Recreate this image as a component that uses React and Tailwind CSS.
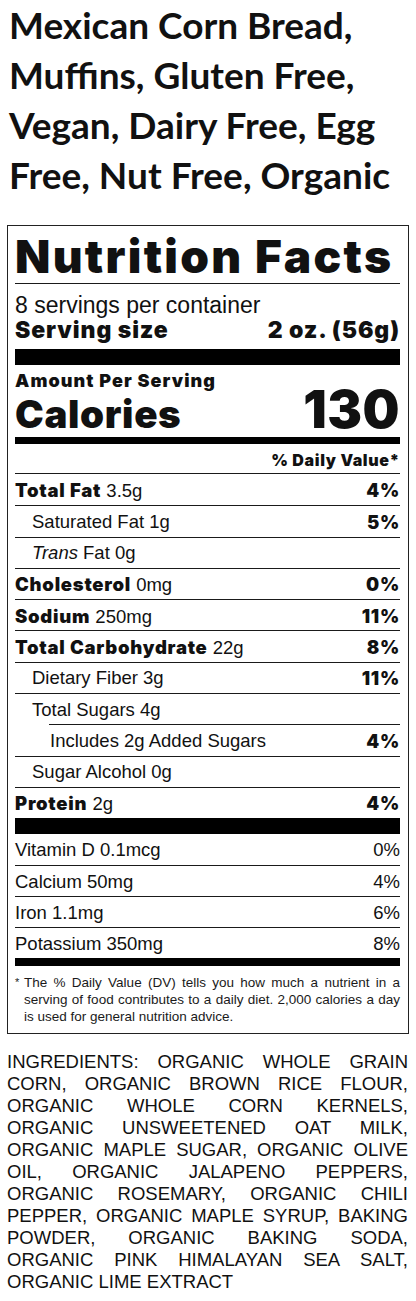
import React from 'react';

const heavy = "font-['Inter',sans-serif] font-black tracking-[0.04em]";
const plain = "font-['Liberation_Sans',Arial,sans-serif]";

const nutrients = [
  { name: 'Total Fat', amount: '3.5g', dv: '4%', bold: true },
  { name: 'Saturated Fat', amount: '1g', dv: '5%', indent: 1 },
  { name: 'Trans', italic: true, amount: 'Fat 0g', indent: 1 },
  { name: 'Cholesterol', amount: '0mg', dv: '0%', bold: true },
  { name: 'Sodium', amount: '250mg', dv: '11%', bold: true },
  { name: 'Total Carbohydrate', amount: '22g', dv: '8%', bold: true },
  { name: 'Dietary Fiber', amount: '3g', dv: '11%', indent: 1 },
  { name: 'Total Sugars', amount: '4g', indent: 1 },
  { name: 'Includes 2g Added Sugars', dv: '4%', indent: 2 },
  { name: 'Sugar Alcohol', amount: '0g', indent: 1 },
  { name: 'Protein', amount: '2g', dv: '4%', bold: true },
];

const vitamins = [
  { name: 'Vitamin D 0.1mcg', dv: '0%' },
  { name: 'Calcium 50mg', dv: '4%' },
  { name: 'Iron 1.1mg', dv: '6%' },
  { name: 'Potassium 350mg', dv: '8%' },
];

const ingredientLines = [
  'INGREDIENTS: ORGANIC WHOLE GRAIN',
  'CORN, ORGANIC BROWN RICE FLOUR,',
  'ORGANIC WHOLE CORN KERNELS,',
  'ORGANIC UNSWEETENED OAT MILK,',
  'ORGANIC MAPLE SUGAR, ORGANIC OLIVE',
  'OIL, ORGANIC JALAPENO PEPPERS,',
  'ORGANIC ROSEMARY, ORGANIC CHILI',
  'PEPPER, ORGANIC MAPLE SYRUP, BAKING',
  'POWDER, ORGANIC BAKING SODA,',
  'ORGANIC PINK HIMALAYAN SEA SALT,',
];

const footnoteLines = [
  'The % Daily Value (DV) tells you how much a nutrient in a',
  'serving of food contributes to a daily diet. 2,000 calories a day',
];

function NutrientRow({ item, first }) {
  const label = item.bold ? (
    <span className={heavy}>{item.name}</span>
  ) : item.italic ? (
    <span className="italic">{item.name}</span>
  ) : (
    <span>{item.name}</span>
  );

  return (
    <div
      className={
        'flex h-[31.3px] justify-between pt-[5.5px] text-[18.5px] leading-[20px] ' +
        (first ? '' : 'border-t border-[#1a1a1a] ') +
        (item.indent === 2 ? 'ml-[34px] pl-[1px]' : item.indent === 1 ? 'pl-[17px]' : '')
      }
    >
      <div>
        {label}
        {item.amount ? ' ' + item.amount : ''}
      </div>
      {item.dv && <div className={heavy}>{item.dv}</div>}
    </div>
  );
}

function NutritionLabel() {
  return (
    <div className={`mx-[7px] mt-[25px] border border-[#222] pl-[7px] pr-[8px] text-[#111] ${plain}`}>
      <div className={`${heavy} border-b border-[#1a1a1a] pt-[7px] pb-[4px] text-[46px] leading-[46px] !tracking-[0.05em]`}>
        Nutrition Facts
      </div>

      <div className="mt-[9px] text-[23px] leading-[25px]">8 servings per container</div>
      <div className={`${heavy} flex justify-between text-[23px] leading-[25px]`}>
        <span>Serving size</span>
        <span>2 oz. (56g)</span>
      </div>

      <div className="mt-[6px] h-[16px] bg-black" />

      <div className={`${heavy} mt-[6px] text-[18px] leading-[20px] !tracking-[0.06em]`}>Amount Per Serving</div>
      <div className={`${heavy} flex items-baseline justify-between`}>
        <span className="text-[38.5px] leading-[37px]">Calories</span>
        <span className="text-[52px] leading-[37px] !tracking-[0.01em]">130</span>
      </div>

      <div className="mt-[4px] h-[7px] bg-black" />

      <div className={`${heavy} border-b border-[#1a1a1a] pt-[6px] pb-[3px] text-right text-[16px] leading-[20px]`}>
        % Daily Value*
      </div>

      {nutrients.map((item, i) => (
        <NutrientRow key={item.name} item={item} first={i === 0} />
      ))}

      <div className="h-[16px] bg-black" />

      {vitamins.map((v, i) => (
        <div
          key={v.name}
          className={
            'flex h-[31px] justify-between pt-[5.5px] text-[18.5px] leading-[20px] ' +
            (i === 0 ? '' : 'border-t border-[#1a1a1a]')
          }
        >
          <span>{v.name}</span>
          <span>{v.dv}</span>
        </div>
      ))}

      <div className="h-[8px] bg-black" />

      <div className="flex pt-[9px] pb-[8px] text-[13.5px] leading-[16.7px] text-[#1a1a1a]">
        <span className="w-[9px] shrink-0 text-[11px] leading-[14px]">*</span>
        <div className="flex-1">
          {footnoteLines.map((line) => (
            <div key={line} className="text-justify [text-align-last:justify]">
              {line}
            </div>
          ))}
          <div>is used for general nutrition advice.</div>
        </div>
      </div>
    </div>
  );
}

export default function App() {
  return (
    <div className="w-[416px] bg-white pb-[9px]">
      <h1 className="pl-[9px] pr-[4px] font-['Lato',sans-serif] text-[37px] font-bold leading-[50px] text-[#111]">
        Mexican Corn Bread, Muffins, Gluten Free, Vegan, Dairy Free, Egg Free, Nut Free, Organic
      </h1>

      <NutritionLabel />

      <div className={`mt-[17px] pl-[7px] pr-[8px] text-[18.5px] leading-[22px] text-[#111] ${plain}`}>
        {ingredientLines.map((line) => (
          <div key={line} className="text-justify [text-align-last:justify]">
            {line}
          </div>
        ))}
        <div>ORGANIC LIME EXTRACT</div>
      </div>
    </div>
  );
}
